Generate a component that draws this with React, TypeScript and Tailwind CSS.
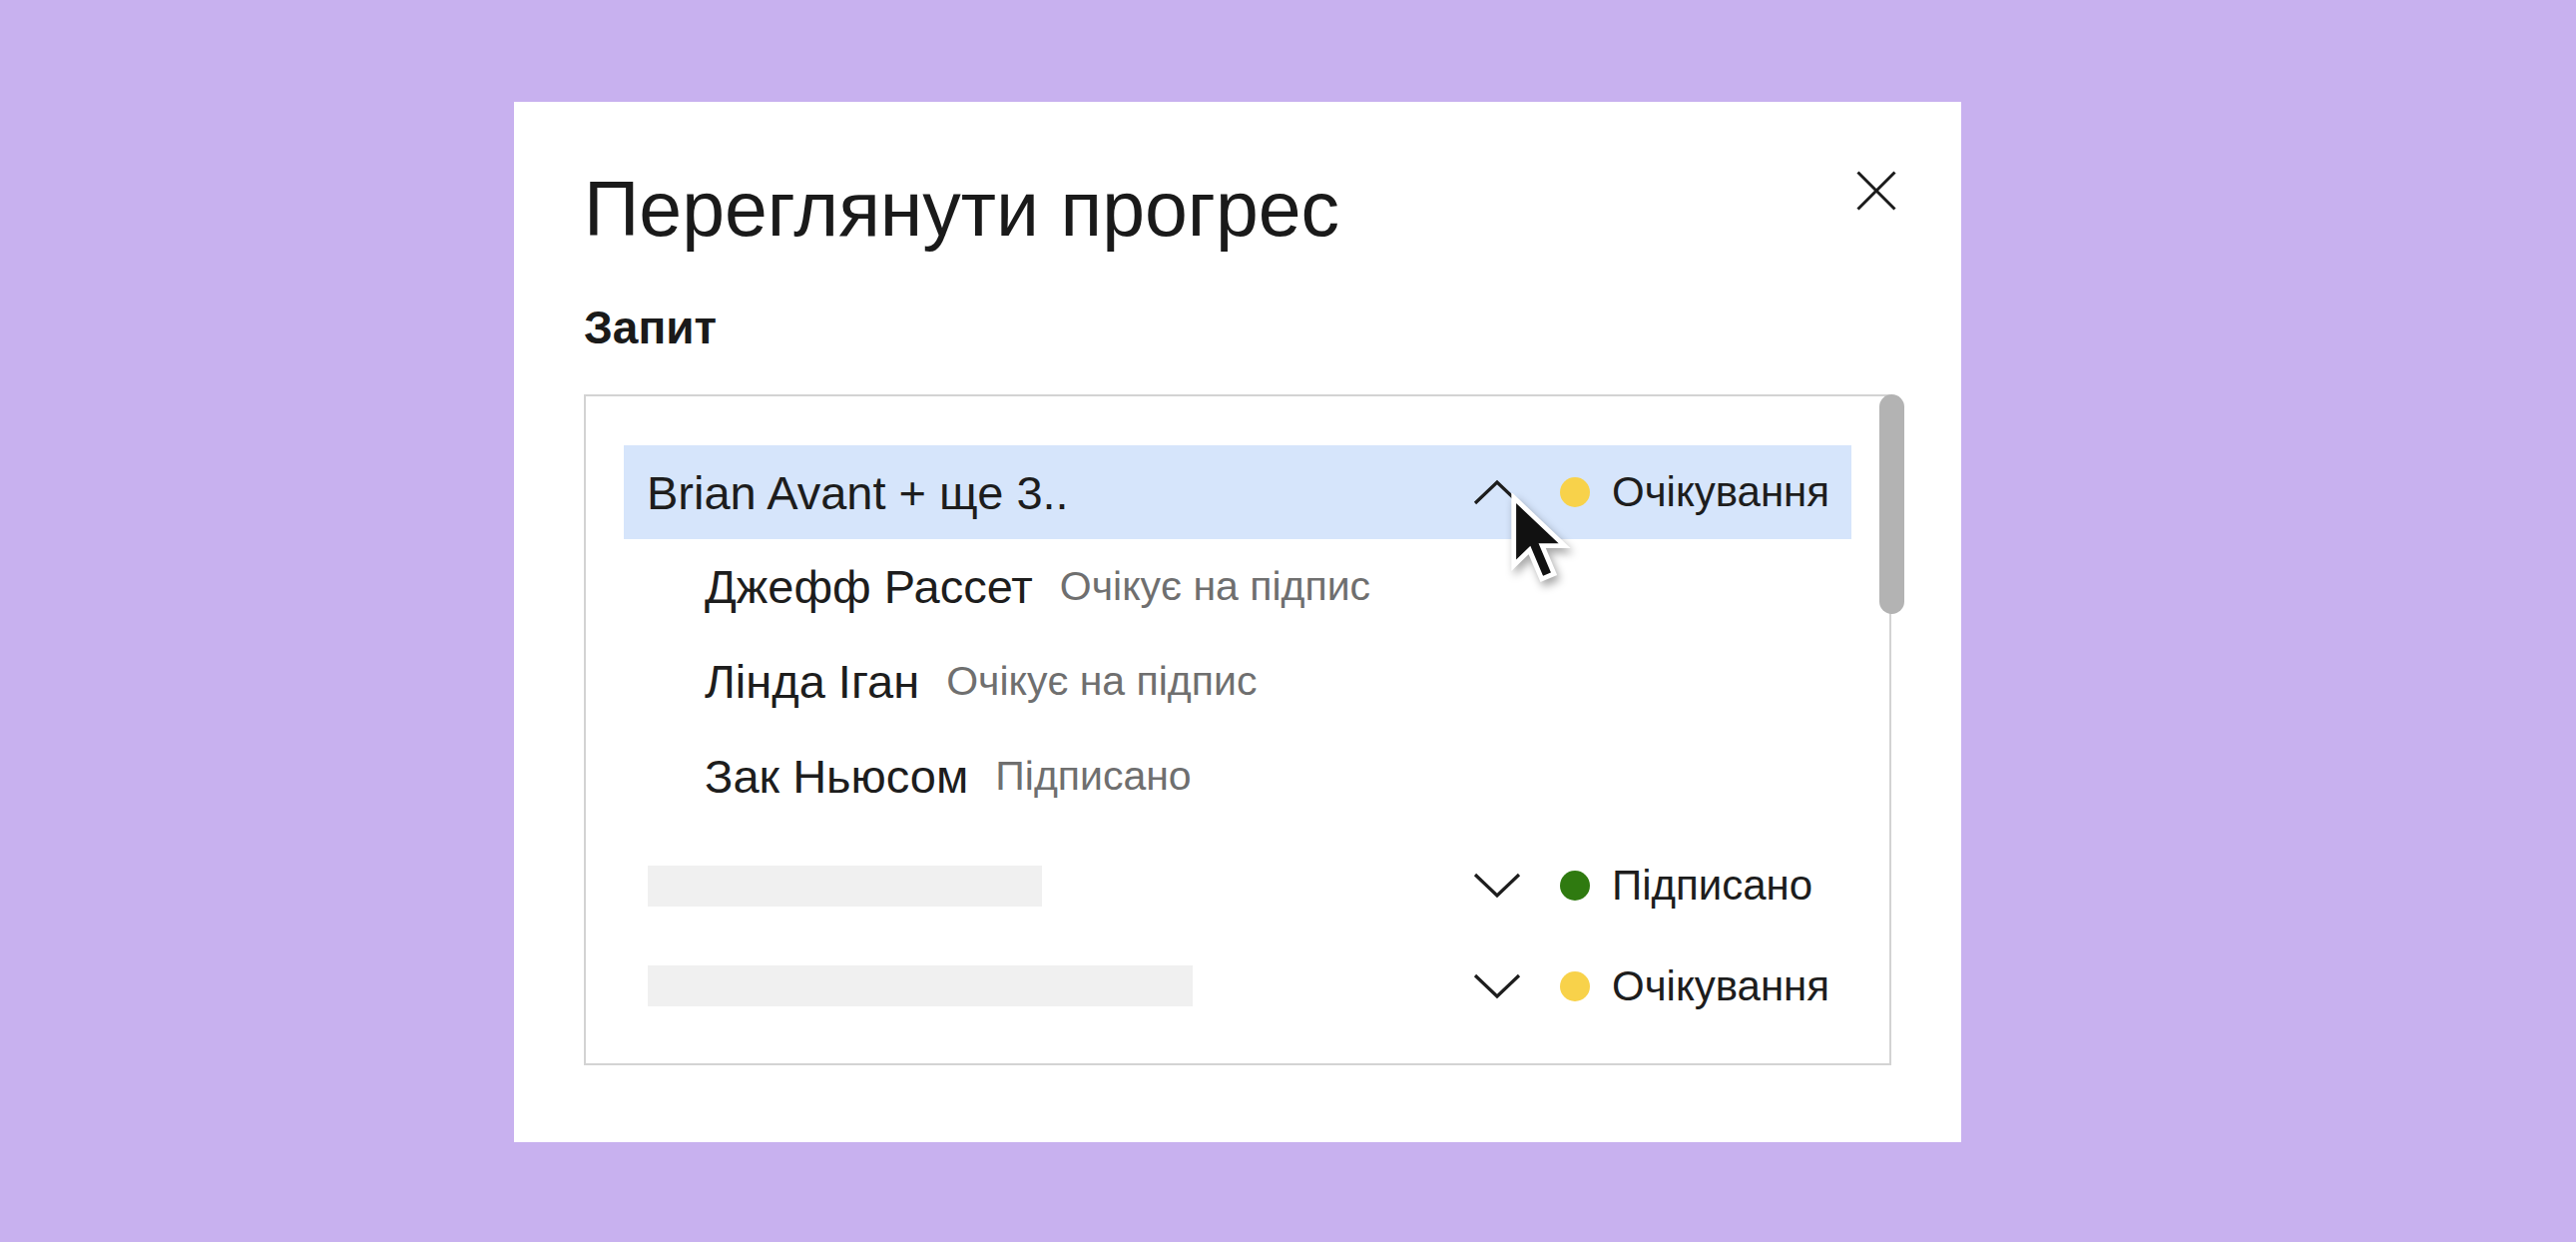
import React from "react";

const FONT = { fontFamily: '"Liberation Sans", Arial, sans-serif' };

function ChevronUp() {
  return (
    <svg width="48" height="26" viewBox="0 0 48 26" className="shrink-0">
      <polyline points="2,24 24,3 46,24" fill="none" stroke="#1d1d1d" strokeWidth="3.2" strokeLinejoin="miter" />
    </svg>
  );
}

function ChevronDown() {
  return (
    <svg width="48" height="26" viewBox="0 0 48 26" className="shrink-0">
      <polyline points="2,2 24,23 46,2" fill="none" stroke="#1d1d1d" strokeWidth="3.2" strokeLinejoin="miter" />
    </svg>
  );
}

function Status({ up, color, label }: { up?: boolean; color: string; label: string }) {
  return (
    <div className="flex items-center shrink-0">
      {up ? <ChevronUp /> : <ChevronDown />}
      <div className={`ml-[39px] w-[30px] h-[30px] rounded-full shrink-0 ${color}`} />
      <div className="ml-[22px] w-[216px] text-[42px] leading-none text-[#1d1d1d] whitespace-nowrap">{label}</div>
    </div>
  );
}

function SubRow({ name, status }: { name: string; status: string }) {
  return (
    <div className="mx-[38px] h-[95px] flex items-center pl-[81px]">
      <span className="text-[47px] leading-none text-[#1d1d1d] whitespace-nowrap">{name}</span>
      <span className="ml-[27px] text-[41px] leading-none text-[#6f6f6f] whitespace-nowrap">{status}</span>
    </div>
  );
}

export default function App() {
  return (
    <div className="w-[2581px] h-[1244px] bg-[#c8b1ef] pl-[515px] pt-[102px]" style={FONT}>
      <div className="w-[1450px] h-[1042px] bg-white flex flex-col px-[70px]">
        <div className="mt-[69px] flex justify-between items-start">
          <h1 className="text-[77px] leading-[77px] text-[#1a1a1a] font-normal whitespace-nowrap">Переглянути прогрес</h1>
          <svg width="40" height="40" viewBox="0 0 40 40" className="mt-[0px] mr-[-5px]">
            <line x1="1.5" y1="1.5" x2="38.5" y2="38.5" stroke="#1a1a1a" strokeWidth="3" />
            <line x1="38.5" y1="1.5" x2="1.5" y2="38.5" stroke="#1a1a1a" strokeWidth="3" />
          </svg>
        </div>
        <div className="mt-[57px] text-[46px] leading-[46px] font-bold text-[#1a1a1a]">Запит</div>
        <div className="relative mt-[44px] h-[672px] border-2 border-[#d3d3d3] pt-[49px]">
          {/* highlighted row */}
          <div className="mx-[38px] h-[94px] bg-[#d6e5fb] flex items-center pl-[23px] pr-[24px]">
            <div className="flex-1 text-[47px] leading-none text-[#1d1d1d] whitespace-nowrap">Brian Avant + ще 3..</div>
            <Status up color="bg-[#f8d24a]" label="Очікування" />
          </div>
          <SubRow name="Джефф Рассет" status="Очікує на підпис" />
          <SubRow name="Лінда Іган" status="Очікує на підпис" />
          <SubRow name="Зак Ньюсом" status="Підписано" />
          <div className="mt-[12px] mx-[38px] h-[100px] flex items-center pl-[24px] pr-[24px]">
            <div className="flex-1">
              <div className="w-[395px] h-[41px] bg-[#f0f0f0]" />
            </div>
            <Status color="bg-[#2f7a10]" label="Підписано" />
          </div>
          <div className="mx-[38px] h-[101px] flex items-center pl-[24px] pr-[24px]">
            <div className="flex-1">
              <div className="w-[546px] h-[41px] bg-[#f0f0f0]" />
            </div>
            <Status color="bg-[#f8d24a]" label="Очікування" />
          </div>

          {/* scrollbar */}
          <div className="absolute right-[-15px] top-[-2px] w-[25px] h-[220px] rounded-full bg-[#b3b3b3]" />

          {/* cursor */}
          <svg
            width="62"
            height="92"
            viewBox="0 0 14 21"
            className="absolute left-[925px] top-[97px] drop-shadow-[3px_5px_4px_rgba(0,0,0,0.35)]"
          >
            <path
              d="M1 1 L1 16.5 L4.6 13 L7.4 19.6 L10.2 18.4 L7.5 12 L12.6 12 Z"
              fill="#111"
              stroke="#fff"
              strokeWidth="1.1"
              strokeLinejoin="miter"
            />
          </svg>
        </div>
      </div>
    </div>
  );
}
